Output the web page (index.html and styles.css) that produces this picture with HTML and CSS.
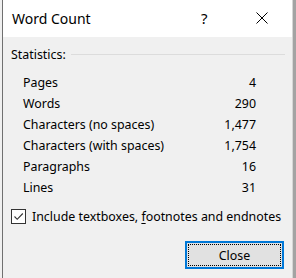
FILE: index.html
```html
<!DOCTYPE html>
<html>
<head>
<meta charset="utf-8">
<link rel="stylesheet" href="styles.css">
</head>
<body>
<div class="screen">
  <div class="edge-left"></div>
  <div class="dialog">
    <div class="titlebar">
      <span class="title">Word Count</span>
      <span class="help">?</span>
      <span class="close-x">
        <svg width="12" height="12" viewBox="0 0 12 12"><path d="M0.5 0.5 L11.5 11.5 M11.5 0.5 L0.5 11.5" stroke="#000" stroke-width="1" fill="none"/></svg>
      </span>
    </div>
    <div class="body">
      <div class="group-head"><span>Statistics:</span><span class="rule"></span></div>
      <div class="stats">
        <div class="row"><span>Pages</span><span>4</span></div>
        <div class="row"><span>Words</span><span>290</span></div>
        <div class="row"><span>Characters (no spaces)</span><span>1,477</span></div>
        <div class="row"><span>Characters (with spaces)</span><span>1,754</span></div>
        <div class="row"><span>Paragraphs</span><span>16</span></div>
        <div class="row"><span>Lines</span><span>31</span></div>
      </div>
      <div class="check">
        <span class="box"><svg width="13" height="13" viewBox="0 0 13 13"><path d="M2.5 6.5 L5.2 9.3 L10.8 3.5" stroke="#333" stroke-width="1.1" fill="none"/></svg></span>
        <span>Include textboxes, <u>f</u>ootnotes and endnotes</span>
      </div>
      <div class="actions">
        <button class="btn"><span class="focus">Close</span></button>
      </div>
    </div>
  </div>
  <div class="edge-right"></div>
</div>
</body>
</html>
```
FILE: styles.css
```css
html, body {
  margin: 0;
  padding: 0;
  background: #f0f0f0;
}
.screen {
  display: flex;
  width: 296px;
  height: 278px;
  font-family: "Noto Sans", "Open Sans", sans-serif;
  color: #000;
}
.edge-left {
  width: 2px;
  background: #f0f0f0;
}
.dialog {
  width: 289px;
  border-left: 1px solid #707070;
  border-right: 1px solid #d6d6d6;
  background: #f0f0f0;
  display: flex;
  flex-direction: column;
}
.edge-right {
  width: 3px;
  background: #a3a3a3;
}
.titlebar {
  height: 37px;
  background: #fff;
  display: flex;
  align-items: center;
  position: relative;
}
.title {
  font-size: 14px;
  margin-left: 9px;
}
.help {
  position: absolute;
  left: 198px;
  top: 8px;
  font-size: 15px;
}
.close-x {
  position: absolute;
  left: 253px;
  top: 12px;
  width: 12px;
  height: 12px;
  display: flex;
}
.body {
  flex: 1;
  padding: 8px 0 0 8px;
  font-size: 12.4px;
}
.group-head {
  display: flex;
  align-items: center;
  height: 18px;
}
.rule {
  flex: 1;
  height: 1px;
  background: #dcdcdc;
  margin: 0 7px 0 5px;
}
.stats {
  margin: 9px 0 0 12px;
  width: 233px;
}
.row {
  display: flex;
  justify-content: space-between;
  height: 21px;
  align-items: center;
}
.check {
  display: flex;
  align-items: center;
  margin-top: 9px;
  height: 18px;
}
.box {
  width: 13px;
  height: 13px;
  border: 1px solid #333;
  background: #fff;
  margin-right: 6px;
  display: flex;
}
.check u {
  text-underline-offset: 2px;
}
.actions {
  display: flex;
  justify-content: flex-end;
  margin: 16px 8px 0 0;
}
.btn {
  width: 99px;
  height: 28px;
  border: 2px solid #0078d7;
  background: #e1e1e1;
  padding: 1px;
  margin: 0;
  font: inherit;
  font-size: 12.4px;
  color: #000;
  display: flex;
}
.focus {
  flex: 1;
  border: 1px dotted #000;
  display: flex;
  align-items: center;
  justify-content: center;
}
```
